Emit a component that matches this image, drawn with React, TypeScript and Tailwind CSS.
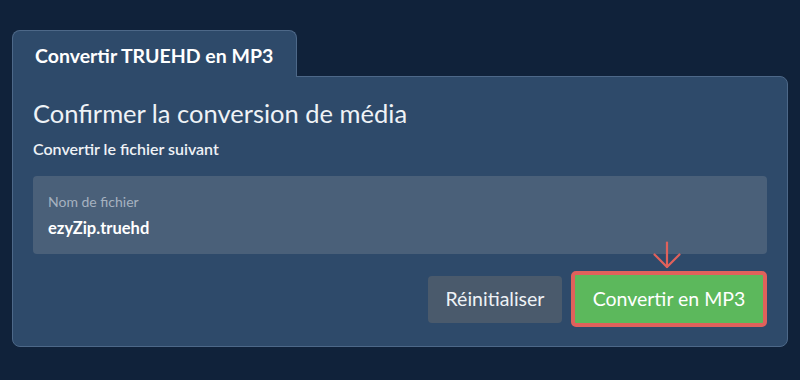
import React from "react";

export default function App() {
  return (
    <div
      className="w-[800px] h-[380px] bg-[#10223a] pt-[30px] pl-[12px]"
      style={{ fontFamily: "Lato, 'Open Sans', sans-serif" }}
    >
      <div className="flex">
        <div className="w-[285px] h-[47px] bg-[#2e4a6a] border border-b-0 border-[#4d6888] rounded-t-[8px] pl-[22px] pt-[13px] relative z-10">
          <span className="block text-white font-bold text-[19.5px] leading-[24px] whitespace-nowrap">Convertir TRUEHD en MP3</span>
        </div>
      </div>
      <div className="w-[776px] -mt-[1px] bg-[#2e4a6a] border border-[#4d6888] rounded-b-[8px] rounded-tr-[8px] px-[20px] pt-[20px] pb-[19px]">
        <h1 className="text-[#eef2f6] text-[25.5px] leading-[32px] font-normal whitespace-nowrap">Confirmer la conversion de média</h1>
        <p className="text-[#eef2f6] text-[16px] font-semibold leading-[20px] mt-[10px]">Convertir le fichier suivant</p>
        <div className="mt-[17px] h-[78px] bg-[#4a6079] rounded-[4px] px-[15px] pt-[17px]">
          <div className="text-[#a6b2c0] text-[14px] leading-[18px]">Nom de fichier</div>
          <div className="text-white font-bold text-[16.5px] leading-[22px] mt-[6px]">ezyZip.truehd</div>
        </div>
        <div className="flex justify-end items-center gap-[9px] mt-[17px]">
          <button className="w-[134px] h-[47px] bg-[#4a5a6c] rounded-[4px] text-[#eef2f6] text-[19.5px]">Réinitialiser</button>
          <div className="relative">
            <svg className="absolute left-[82px] -top-[30px]" width="28" height="28" viewBox="0 0 28 28" fill="none" stroke="#e0615b" strokeWidth="2.2" strokeLinecap="round" strokeLinejoin="round">
              <path d="M14 1.5 V26" />
              <path d="M1.5 13.5 L14 26 L26.5 13.5" />
            </svg>
            <button className="w-[196px] h-[56px] bg-[#5cb85c] border-[4px] border-[#e0615b] rounded-[5px] text-white text-[19.5px]">Convertir en MP3</button>
          </div>
        </div>
      </div>
    </div>
  );
}
